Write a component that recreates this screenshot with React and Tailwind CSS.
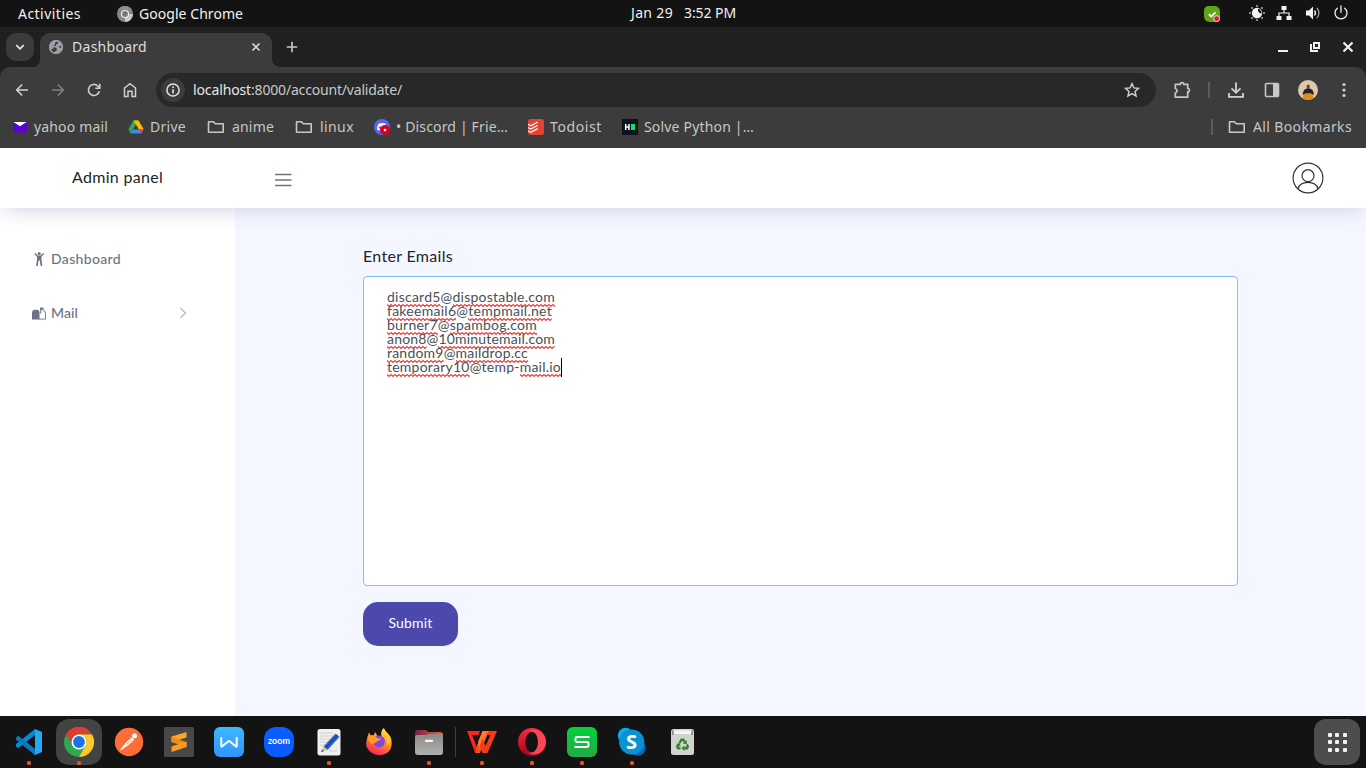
import { useLayoutEffect, useRef } from "react";

/* Text set to an exact advance width by spreading the tracking evenly. */
function Fit({ w, className = "", children }) {
  const ref = useRef(null);
  useLayoutEffect(() => {
    const el = ref.current;
    el.style.letterSpacing = "0px";
    const natural = el.getBoundingClientRect().width;
    el.style.letterSpacing = (w - natural) / el.textContent.length + "px";
  }, [w]);
  return (
    <span className={"block shrink-0 whitespace-pre " + className} style={{ width: w }}>
      <span ref={ref} className="inline-block">{children}</span>
    </span>
  );
}

function Svg({ w = 16, h = w, box, className = "", children }) {
  return (
    <svg width={w} height={h} viewBox={box || `0 0 ${w} ${h}`} fill="none" className={"block shrink-0 " + className}>
      {children}
    </svg>
  );
}

function Folder({ className }) {
  return (
    <Svg w={18} h={14} className={className}>
      <path d="M1.500 1.700h4.900l1.900 2h7.900v8.500H1.500z" stroke="#c7c7c7" strokeWidth="1.600" strokeLinejoin="round" />
    </Svg>
  );
}

function SystemBar() {
  return (
    <div className="grid h-[27px] shrink-0 grid-cols-[631px_105px_1fr] items-center bg-[#131313] text-[14px] text-[#f2f2f2]">
      <div className="flex items-center">
        <Fit w={63} className="ml-[18px]">Activities</Fit>
        <Svg w={16} className="ml-9">
          <circle cx="8" cy="8" r="8" fill="#858585" />
          <path d="M8 8h8a8 8 0 0 1-8 8z" fill="#c9c9c9" />
          <path d="M1 4a8 8 0 0 1 14 0H8z" fill="#8c8c8c" />
          <circle cx="8" cy="8" r="4.100" fill="#eee" />
          <circle cx="8" cy="8" r="2.900" fill="#777" />
        </Svg>
        <Fit w={104} className="ml-[6px]">Google Chrome</Fit>
      </div>
      <div className="flex justify-between pb-px">
        <Fit w={42}>Jan 29</Fit>
        <Fit w={52}>3:52 PM</Fit>
      </div>
      <div className="flex items-center pb-px pl-[468px]">
        <Svg w={16} className="mt-px">
          <path d="M4.500 0h6C14 0 16 2.500 16 6v6c0 2-2 4-4 4H6c-4 0-6-3-6-6V4.500C0 2 2 0 4.500 0z" fill="#62a514" />
          <path d="M4.800 8.200l2.400 2.400 4.300-4.300" stroke="#fff" strokeWidth="1.700" />
          <circle cx="12.700" cy="12.700" r="3" fill="#e41d2c" stroke="#e9e9e9" strokeWidth=".9" />
        </Svg>
        <Svg w={16} className="ml-[29px]">
          <circle cx="8" cy="8" r="5.200" fill="#f2f2f2" />
          <path d="M9 3.700a4 4 0 0 0 3.500 4.800A4.500 4.500 0 0 0 9 3.700z" fill="#131313" />
          <g fill="#bdbdbd">
            <circle cx="8" cy="1" r=".9" /><circle cx="8" cy="15" r=".9" /><circle cx="1" cy="8" r=".9" /><circle cx="15" cy="8" r=".9" />
            <circle cx="3" cy="3" r=".9" /><circle cx="13" cy="3" r=".9" /><circle cx="3" cy="13" r=".9" /><circle cx="13" cy="13" r=".9" />
          </g>
        </Svg>
        <Svg w={16} className="ml-[11px]">
          <path d="M5.500 1h5v4h-5zM.5 11h5v4h-5zM10.500 11h5v4h-5z" fill="#f2f2f2" />
          <path d="M8 4v4M3 11.500V8h10v3.500" stroke="#f2f2f2" strokeWidth="1.200" />
        </Svg>
        <Svg w={16} className="ml-[13px]">
          <path d="M1 5.500h3L8 1.500v13l-4-4H1z" fill="#f2f2f2" />
          <path d="M9.500 5.500a4 4 0 0 1 0 5" stroke="#f2f2f2" strokeWidth="1.300" />
          <path d="M11.700 3c3 2.500 3 7.500 0 10" stroke="#a8a8a8" strokeWidth="1.200" />
        </Svg>
        <Svg w={16} className="ml-[12px]">
          <path d="M8 .8v6.500M4.300 3.200a6 6 0 1 0 7.400 0" stroke="#f2f2f2" strokeWidth="1.300" strokeLinecap="round" />
        </Svg>
      </div>
    </div>
  );
}

function TabStrip() {
  return (
    <div className="flex h-10 shrink-0 items-end bg-[#1f2120]">
      <div className="mb-[6px] ml-[6px] flex h-7 w-7 items-center justify-center rounded-[10px] bg-[#3b3b3b]">
        <Svg w={10}>
          <path d="M1.300 3.200L5 6.900l3.700-3.700" stroke="#e8e8e8" strokeWidth="1.700" />
        </Svg>
      </div>
      <Svg w={6} h={8}><path d="M6 0v8H0c4 0 6-4 6-8z" fill="#3c3c3c" /></Svg>
      <div className="flex h-[34px] w-[232px] items-center rounded-t-[10px] bg-[#3c3c3c] pb-[6px] text-[14px] text-[#dedede]">
        <Svg w={14} className="ml-[9px]">
          <circle cx="7" cy="7" r="7" fill="#9aa0a6" />
          <path d="M6.800 1.500L9 1.800l.3 1.500-1.800.8-.8 1.600-2 .6v1.200h2.200l1 1.500-.3 1.600-1.600 1-.6 1.500c-2-.4-3.600-2-4-4.200l2.400.3M9.500 6.300l2.800-.2v2l-1.800-.6z" fill="#3c3c3c" />
          <circle cx="7" cy="7" r="6.300" stroke="#9aa0a6" strokeWidth="1.400" />
        </Svg>
        <Fit w={75} className="ml-[9px]">Dashboard</Fit>
        <Svg w={10} className="ml-[104px]">
          <path d="M1.500 1.500l7 7M8.500 1.500l-7 7" stroke="#e3e3e3" strokeWidth="1.500" />
        </Svg>
      </div>
      <Svg w={10} h={8}><path d="M0 0v8h10C4 8 0 5 0 0z" fill="#3c3c3c" /></Svg>
      <Svg w={12} className="mb-[14px] ml-1">
        <path d="M6 .8v10.400M.8 6h10.400" stroke="#c7c7c7" strokeWidth="1.600" />
      </Svg>
      <div className="mb-3 ml-auto mr-[12px] flex items-center gap-[20px]">
        <Svg w={12} h={16}><path d="M0 12h10" stroke="#f0f0f0" strokeWidth="2" /></Svg>
        <Svg w={12} h={16}>
          <path d="M4 4h5v5H4z" stroke="#f0f0f0" strokeWidth="2" />
          <path d="M1 5v7h7" stroke="#f0f0f0" strokeWidth="2" />
        </Svg>
        <Svg w={12} h={16}><path d="M1.500 3.500l9 9M10.500 3.500l-9 9" stroke="#f0f0f0" strokeWidth="2.200" /></Svg>
      </div>
    </div>
  );
}

function Toolbar() {
  return (
    <div className="bg-[#1f2120]">
      <div className="flex h-[46px] items-center rounded-t-[10px] bg-[#3c3c3c] text-[14px] text-[#c9c9c9]">
        <Svg w={14} className="ml-[15px]">
          <path d="M13 7H2M7.200 1.500L1.700 7l5.500 5.500" stroke="#d0d0d0" strokeWidth="1.600" />
        </Svg>
        <Svg w={14} className="ml-[22px]">
          <path d="M1 7h11M6.800 1.500L12.300 7l-5.500 5.500" stroke="#808080" strokeWidth="1.600" />
        </Svg>
        <Svg w={14} className="ml-[22px]">
          <path d="M12.300 8.200A5.500 5.500 0 1 1 10.800 3l1.700 1.700" stroke="#d0d0d0" strokeWidth="1.600" />
          <path d="M12.800.7v4.500H8.300" stroke="#d0d0d0" strokeWidth="1.500" />
        </Svg>
        <Svg w={14} h={16} className="ml-[22px]">
          <path d="M1.500 6L7 1.700 12.500 6v8.500H9V9.200H5v5.300H1.500z" stroke="#d0d0d0" strokeWidth="1.500" />
        </Svg>
        <div className="ml-[19px] flex h-[34px] w-[1000px] items-center rounded-full bg-[#282828]">
          <div className="ml-[5px] flex h-6 w-6 items-center justify-center rounded-full bg-[#3c3c3c]">
            <Svg w={14}>
              <circle cx="7" cy="7" r="6.100" stroke="#e3e3e3" strokeWidth="1.500" />
              <path d="M7 6.300v4.100M7 3.500v1.500" stroke="#e3e3e3" strokeWidth="1.600" />
            </Svg>
          </div>
          <Fit w={58} className="ml-2 text-[#e6e6e6]">localhost</Fit>
          <Fit w={151}>:8000/account/validate/</Fit>
          <Svg w={16} className="ml-auto mr-4">
            <path d="M8 1.600l1.900 4.300 4.600.4-3.500 3.100 1.100 4.600L8 11.600 3.900 14 5 9.400 1.500 6.300l4.600-.4z" stroke="#d0d0d0" strokeWidth="1.400" />
          </Svg>
        </div>
        <Svg w={18} className="ml-[18px]">
          <path d="M1.300 3.300h5a1.700 1.700 0 0 1 3.400 0h4v4.200a1.700 1.700 0 0 1 0 3.400v5.300H1.300v-4.400a2.200 2.200 0 0 0 0-4.300z" stroke="#c7c7c7" strokeWidth="1.700" strokeLinejoin="round" />
        </Svg>
        <div className="ml-4 h-4 w-0.5 bg-[#5c5c5c]" />
        <Svg w={16} className="ml-[18px]">
          <path d="M8 .5v10M3.500 6.300L8 10.700l4.500-4.400M1 11v3.800h14V11" stroke="#d0d0d0" strokeWidth="1.800" />
        </Svg>
        <Svg w={16} className="ml-5">
          <rect x="1.500" y="1.500" width="13" height="13" rx="1" stroke="#c7c7c7" strokeWidth="1.600" />
          <path d="M9 1.500h5.500v13H9z" fill="#c7c7c7" />
        </Svg>
        <Svg w={20} className="ml-[18px]">
          <circle cx="10" cy="10" r="10" fill="#dccbaa" />
          <path d="M4.500 14l1.500-4 2.500-1.500h3.500l2.500 1.500 1.500 4-2 1.500H6.500z" fill="#20222c" />
          <ellipse cx="10.200" cy="6.700" rx="1.600" ry="2.200" fill="#68452f" />
          <path d="M5.300 14.500l2.500-1.200h5l2.200 1.200.3 4a10 10 0 0 1-10.500 0z" fill="#dc8f1f" />
        </Svg>
        <Svg w={4} h={16} className="ml-6">
          <circle cx="2" cy="2.500" r="1.600" fill="#d0d0d0" /><circle cx="2" cy="8" r="1.600" fill="#d0d0d0" /><circle cx="2" cy="13.500" r="1.600" fill="#d0d0d0" />
        </Svg>
      </div>
    </div>
  );
}

function Bookmarks() {
  return (
    <div className="relative z-20 flex h-[35px] shrink-0 items-start bg-[#3c3c3c] text-[14px] text-[#c7c7c7]">
      <div className="flex h-7 w-full items-center">
        <Svg w={14} h={12} className="ml-[13px]">
          <path d="M0 1h14v10.500H0z" fill="#5f01d1" /><path d="M.5 1h13L7 5.300z" fill="#fff" />
        </Svg>
        <Fit w={74} className="ml-[7px]">yahoo mail</Fit>
        <Svg w={16} h={14} className="ml-5">
          <path d="M5.400.5h5L5.200 9.200l-2.500 4.300L.4 9.200z" fill="#34a853" />
          <path d="M5.400.5h5.200l5 8.700h-5z" fill="#fbbc04" />
          <path d="M5.200 9.200h10.400l-2.500 4.300H2.700z" fill="#4285f4" />
          <path d="M10.600 9.200h5l-2.500 4.300z" fill="#ea4335" />
          <path d="M8 4.900l2.600 4.300H5.400z" fill="#3c3c3c" />
        </Svg>
        <Fit w={36} className="ml-[6px]">Drive</Fit>
        <Folder className="ml-[21px]" />
        <Fit w={42} className="ml-[7px]">anime</Fit>
        <Folder className="ml-[21px]" />
        <Fit w={34} className="ml-[7px]">linux</Fit>
        <Svg w={16} className="ml-5">
          <circle cx="8" cy="8" r="8" fill="#5865f2" />
          <path d="M4.800 4.500Q8 3.300 11.200 4.500q2 3 1.800 6l-2.500 1.300-.8-1.200H6.300l-.8 1.200L3 10.500q-.2-3 1.800-6z" fill="#fff" />
          <circle cx="6" cy="8.500" r="1.200" fill="#5865f2" />
          <circle cx="11" cy="11" r="5" fill="#d9001b" /><circle cx="11" cy="11" r="1.300" fill="#fff" />
        </Svg>
        <Fit w={112} className="ml-[6px]">• Discord | Frie…</Fit>
        <Svg w={16} className="ml-5">
          <rect width="16" height="16" rx="2.500" fill="#e44332" />
          <path d="M0 5.300l2.800 1.400L9.700 3M0 8.600L2.800 10l6.900-3.700M0 11.900l2.800 1.400 6.900-3.700" stroke="#fff" strokeWidth="1.200" />
        </Svg>
        <Fit w={52} className="ml-[6px]">Todoist</Fit>
        <Svg w={16} className="ml-5">
          <path d="M0 0h16v16H0z" fill="#0e141e" />
          <path d="M3.700 5v6M7 5v6M3.700 8H7" stroke="#fff" strokeWidth="1.500" />
          <path d="M9 5h4v6H9z" fill="#05e762" />
        </Svg>
        <Fit w={110} className="ml-[6px]">Solve Python |…</Fit>
        <div className="ml-[457px] h-4 w-0.5 bg-[#5c5c5c]" />
        <Folder className="ml-[15px]" />
        <Fit w={99} className="ml-[7px]">All Bookmarks</Fit>
      </div>
    </div>
  );
}

function Header() {
  return (
    <header className="relative z-10 flex h-[60px] shrink-0 items-center bg-white font-[Lato,sans-serif] text-[16px] text-[#212529] shadow-[0px_5px_21px_-5px_#c8cade]">
      <Fit w={91} className="ml-[72px] pb-0.5">Admin panel</Fit>
      <Svg w={18} h={14} className="ml-[111px] mt-1">
        <path d="M1 1.500h16.500M1 7h16.500M1 12.500h16.500" stroke="#6c7383" strokeWidth="1.500" />
      </Svg>
      <Svg w={32} className="ml-auto mr-[42px]">
        <path d="M16 1C26 1 31 6.500 31 16s-5 15-15 15S1 25.500 1 16 6 1 16 1z" stroke="none" />
        <circle cx="16" cy="16" r="14.900" stroke="#333" strokeWidth="1.200" />
        <circle cx="16" cy="13.700" r="6" stroke="#333" strokeWidth="1.200" />
        <path d="M5.800 26.800c2.700-8.600 17.700-8.600 20.400 0" stroke="#333" strokeWidth="1.200" />
      </Svg>
    </header>
  );
}

function Sidebar() {
  return (
    <nav className="flex w-[235px] shrink-0 flex-col gap-9 bg-white pt-[42px] text-[14px] font-medium leading-[18px] text-[#6c7383]">
      <div className="flex items-center pl-8">
        <Svg w={14}>
          <circle cx="7.200" cy="1.700" r="1.600" fill="#6c7383" />
          <path d="M2.800 1.500L5.500 4.300h3.400l2.700-2.800" stroke="#6c7383" strokeWidth="1.300" />
          <path d="M5 3.800h4.400v4.500H5z" fill="#6c7383" />
          <path d="M5.900 7.500L4.900 14M8.500 7.500l1 6.500" stroke="#6c7383" strokeWidth="1.700" />
        </Svg>
        <Fit w={70} className="ml-[5px]">Dashboard</Fit>
      </div>
      <div className="flex items-center pl-8">
        <Svg w={14} h={13}>
          <path d="M0 12.500V5.500Q0 3 2.500 2.700H5Q7.500 3 7.500 5.500v7z" fill="#6c7383" />
          <path d="M10.500 3.200q3 0 3 3v5.900H7" stroke="#6c7383" strokeWidth=".9" />
          <path d="M8.700 6.500V.8" stroke="#6c7383" strokeWidth="1.100" /><path d="M8.300.5h3.200v2.300H8.300z" fill="#6c7383" />
        </Svg>
        <Fit w={27} className="ml-[5px]">Mail</Fit>
        <Svg w={8} h={12} className="ml-[101px]">
          <path d="M1.300 1l5.200 5-5.200 5" stroke="#81879a" strokeWidth="1" />
        </Svg>
      </div>
    </nav>
  );
}

const emails = [
  ["discard5", "@", "dispostable.com", 168],
  ["fakeemail6", "@", "tempmail.net", 165],
  ["burner7", "@", "spambog.com", 150],
  ["anon8", "@", "10minutemail.com", 168],
  ["random9", "@", "maildrop.cc", 141],
  ["temporary10", "@temp-", "mail.io", 174],
];

function Misspelt({ id, children }) {
  return (
    <span className="relative inline-block leading-[14px]">
      {children}
      <svg className="absolute left-0 top-[14px] h-[3px] w-full">
        <pattern id={id} width="4" height="3" patternUnits="userSpaceOnUse">
          <path d="M-1 1.500L0 .6L2 2.400L4 .6L5 1.500" fill="none" stroke="#ff1d1d" strokeWidth="1.100" />
        </pattern>
        <rect width="100%" height="3" fill={`url(#${id})`} />
      </svg>
    </span>
  );
}

function Form() {
  return (
    <main className="flex flex-1 flex-col items-start bg-[#f4f7ff] pl-32 pt-9">
      <Fit w={90} className="text-[16px] leading-6 text-[#212529]">Enter Emails</Fit>
      <div className="mt-2 h-[310px] w-[875px] rounded-[4px] border border-[#80bdff] bg-white pl-[23px] pt-[13px] text-[14px] leading-[14px] text-[#495057]">
        {emails.map(([user, mid, host, width], i) => (
          <div key={user} className="flex h-[14px]">
            <Fit w={width}>
              <Misspelt id={"user" + i}>{user}</Misspelt>
              {mid}
              <Misspelt id={"host" + i}>{host}</Misspelt>
            </Fit>
            {i === 5 && <div className="-mt-0.5 h-[19px] w-px shrink-0 bg-black" />}
          </div>
        ))}
      </div>
      <button className="mt-4 flex h-11 w-[95px] items-center justify-center rounded-[15px] bg-[#4b49ac] pb-0.5 text-[14px] leading-[14px] text-white">
        <Fit w={44}>Submit</Fit>
      </button>
    </main>
  );
}

function Tile({ dot, active, children }) {
  return (
    <div className="flex h-[52px] w-[50px] shrink-0 items-center justify-center">
      <div className={"relative flex h-[46px] w-[46px] items-center justify-center rounded-[13px] " + (active ? "bg-[#434343]" : "")}>
        {children}
        {dot && <div className="absolute bottom-0 left-[21px] h-1 w-1 rounded-[1.500px] bg-[#e95420]" />}
      </div>
    </div>
  );
}

function Dock() {
  return (
    <div className="flex h-[52px] shrink-0 items-center bg-[#131313] pl-1">
      <Tile dot>
        <Svg w={28}>
          <path d="M1 9.500l2-1.700L20 21v6L1 12z" fill="#0065a9" />
          <path d="M1 18.500l2 1.700L20 7V1L1 16z" fill="#0788d1" />
          <path d="M20 1l7 3v20l-7 3z" fill="#27a9f2" />
          <path d="M3 7.800L20 21v6L1 11z" fill="#087bbd" />
        </Svg>
      </Tile>
      <Tile dot active>
        <Svg w={30}>
          <circle cx="15" cy="15" r="15" fill="#2da94f" />
          <path d="M2 7.500A15 15 0 0 1 28 7.500H15a7.500 7.500 0 0 0-6.500 11z" fill="#df3b30" />
          <path d="M28 7.500A15 15 0 0 1 15 30l6.500-11.300A7.500 7.500 0 0 0 15 7.500z" fill="#fdc928" />
          <circle cx="15" cy="15" r="7.500" fill="#fff" />
          <circle cx="15" cy="15" r="5.900" fill="#1a73e8" />
        </Svg>
      </Tile>
      <Tile>
        <Svg w={30}>
          <circle cx="15" cy="15" r="14.200" fill="#ff6c37" />
          <circle cx="20.500" cy="8.800" r="2.500" fill="#fff" />
          <path d="M18.300 10.800l-5 4.500L7 22.500l6.500-4.500 6.200-5.800" fill="#fff" stroke="#fff" strokeWidth="1.300" strokeLinejoin="round" />
          <path d="M12.500 17.500l5-4.500" stroke="#ff6c37" strokeWidth=".7" />
        </Svg>
      </Tile>
      <Tile>
        <Svg w={30}>
          <rect width="30" height="30" rx="1.500" fill="#484848" />
          <path d="M22.500 5v5.500L7.500 15V9.500z" fill="#ffa329" />
          <path d="M7.500 9.500l15 5.700v5L7.500 15z" fill="#f28b12" />
          <path d="M22.500 14.500V20L7.500 25v-5.500z" fill="#ff9b21" />
        </Svg>
      </Tile>
      <Tile>
        <Svg w={30}>
          <defs><linearGradient id="writer" x2="0" y2="1"><stop stopColor="#3db8ff" /><stop offset="1" stopColor="#3293ff" /></linearGradient></defs>
          <rect width="30" height="30" rx="6" fill="url(#writer)" />
          <path d="M7.300 10v10L15 13.800l7.700 6.200V10" stroke="#fff" strokeWidth="2" strokeLinejoin="bevel" />
        </Svg>
      </Tile>
      <Tile>
        <div className="flex h-[30px] w-[30px] items-center justify-center rounded-[12px] bg-[#0b5cff]">
          <Fit w={22} className="pb-[3px] text-center font-[Lato,sans-serif] text-[9px] font-bold leading-3 text-white">zoom</Fit>
        </div>
      </Tile>
      <Tile dot>
        <Svg w={30}>
          <rect x="3.500" y="2" width="23" height="26.500" rx="2.500" fill="#f0f0ee" />
          <path d="M6 6h13M6 9h15M6 12h11M6 15h9M6 18h8M15 24h8" stroke="#cfcfca" />
          <path d="M9.500 19.500L21.500 6.500l4 3.500L13.500 23z" fill="#2868ce" />
          <path d="M12 20.500L23.500 8.300" stroke="#173f99" strokeWidth="1.300" />
          <path d="M9.500 19.500l4 3.500-6.200 2z" fill="#efb584" /><path d="M7.200 25l.9-2.400 1.500 1.600z" fill="#333" />
        </Svg>
      </Tile>
      <Tile>
        <Svg w={30}>
          <defs><linearGradient id="fox" x1=".8" y1="0" x2=".3" y2="1"><stop stopColor="#fff44f" /><stop offset=".45" stopColor="#ff9222" /><stop offset="1" stopColor="#f9215e" /></linearGradient></defs>
          <path d="M5 5.500l2 3 3-.5 1-3 2.500 4h4c-1-3 .5-7 2.500-8 1 4 5 5 7 10C30 23 23 28 15.500 28 7 28 .5 21 2.500 14c.4-3 1.500-6 2.500-8.500z" fill="url(#fox)" />
          <circle cx="15" cy="14.500" r="6" fill="#8248d9" />
          <path d="M4 10c3-3 7-1 10 1.500h3c-1 2-3 2-4 3-1.500 2-3 1-4 3-3-1-5-4-5-7.500z" fill="#ff9d1f" />
          <path d="M19 9c4 1 6 5 4 9l2-1c1-5-1-7-6-8z" fill="#ffd53c" />
        </Svg>
      </Tile>
      <Tile dot>
        <Svg w={30}>
          <defs>
            <linearGradient id="files" x2="1"><stop stopColor="#76204d" /><stop offset="1" stopColor="#ed632b" /></linearGradient>
            <linearGradient id="front" x2="0" y2="1"><stop stopColor="#8b8b89" /><stop offset="1" stopColor="#b0b0ae" /></linearGradient>
          </defs>
          <path d="M1 5q0-2 2-2h8q2 0 3 2h12q3 0 3 3v5H1z" fill="url(#files)" />
          <path d="M1 10q0-2 2-2h9l3-1h12q2 0 2 2v16q0 3-3 3H4q-3 0-3-3z" fill="url(#front)" />
          <rect x="11" y="12.700" width="8" height="2.300" rx=".5" fill="#f6f6f6" />
        </Svg>
      </Tile>
      <div className="mx-px h-[30px] w-px shrink-0 bg-[#3e3e3e]" />
      <Tile dot>
        <Svg w={30}>
          <path d="M0 4h13l-1.500 4H5l4.500 11L8 25.500z" fill="#f9251f" />
          <path d="M15.500 4H22L12.500 26H8l2-7z" fill="#ff702a" />
          <path d="M8 26l2.500-9 3 7.500-.8 1.500z" fill="#ff4b17" />
          <path d="M18 4h12l-9.500 22h-5l-3-7 3-7.500 3 7.500L23.500 8H17z" fill="#f93a1a" />
          <path d="M15.200 12L22 4h-6.500L11 15l1.500 4z" fill="#ff7a2d" />
        </Svg>
      </Tile>
      <Tile dot>
        <Svg w={30}>
          <defs><linearGradient id="opera" x2="0" y2="1"><stop stopColor="#f52c43" /><stop offset="1" stopColor="#a80016" /></linearGradient></defs>
          <circle cx="15" cy="15" r="14" fill="url(#opera)" />
          <path d="M11 4.500C18-1 29 5 29 15S18 31 11 25.500c5 1 9-3 9-10.500S16 3.500 11 4.500z" fill="#fb4552" />
          <ellipse cx="14.700" cy="15" rx="6.300" ry="10.300" fill="#131313" />
        </Svg>
      </Tile>
      <Tile dot>
        <Svg w={30}>
          <defs><linearGradient id="sheet" x2="0" y2="1"><stop stopColor="#04d13a" /><stop offset="1" stopColor="#24a94a" /></linearGradient></defs>
          <rect width="30" height="30" rx="6" fill="url(#sheet)" />
          <path d="M22.500 10H10q-1.500 0-1.500 1.500v2Q8.500 15 10 15h10q1.500 0 1.500 1.500v2Q21.500 20 20 20H7.500" stroke="#fff" strokeWidth="1.900" />
        </Svg>
      </Tile>
      <Tile dot>
        <div className="relative flex h-[30px] w-[30px] items-center justify-center">
          <Svg w={30} className="absolute inset-0">
            <circle cx="8.500" cy="8.500" r="7.700" fill="#0eabe7" /><circle cx="21" cy="21" r="7.700" fill="#0b63bd" />
            <circle cx="14.700" cy="15" r="12.600" fill="#0793d3" />
          </Svg>
          <span className="relative pr-px font-['Open_Sans',sans-serif] text-[20px] font-bold leading-none text-white">S</span>
        </div>
      </Tile>
      <Tile>
        <Svg w={30}>
          <rect x="4" y="2" width="23" height="26" rx="2.500" fill="#d2d2d0" />
          <path d="M6 3.500h19V7H6z" fill="#f5f5f5" /><path d="M6 3.500V8M25 3.500V8" stroke="#676767" strokeWidth="1.200" />
          <g stroke="#30852a" strokeWidth="2.400">
            <path d="M12.500 16l1.900-3.200h2l1.300 2.200M19.800 17.500l1 2-.8 1.700h-2.700M13.500 21.200h-2.300l-1-1.700 1.200-2" />
          </g>
          <path d="M19.800 13v4h-4zM17.500 18.500V24l-3-2.700zM9 17l3.700-1 1 3.600z" fill="#30852a" />
        </Svg>
      </Tile>
      <div className="ml-auto mr-[6px] flex h-[46px] w-[46px] items-center justify-center rounded-[12px] bg-[#4d4d4d]">
        <div className="grid grid-cols-3 gap-[3.500px]">
          {Array.from({ length: 9 }, (_, i) => <div key={i} className="h-1 w-1 rounded-[1px] bg-[#f2f2f2]" />)}
        </div>
      </div>
    </div>
  );
}

export default function App() {
  return (
    <div className="flex h-[768px] w-[1366px] flex-col overflow-hidden bg-white font-['Noto_Sans',sans-serif] leading-5">
      <SystemBar />
      <TabStrip />
      <Toolbar />
      <Bookmarks />
      <Header />
      <div className="flex min-h-0 flex-1 font-[Lato,sans-serif]">
        <Sidebar />
        <Form />
      </div>
      <Dock />
    </div>
  );
}
